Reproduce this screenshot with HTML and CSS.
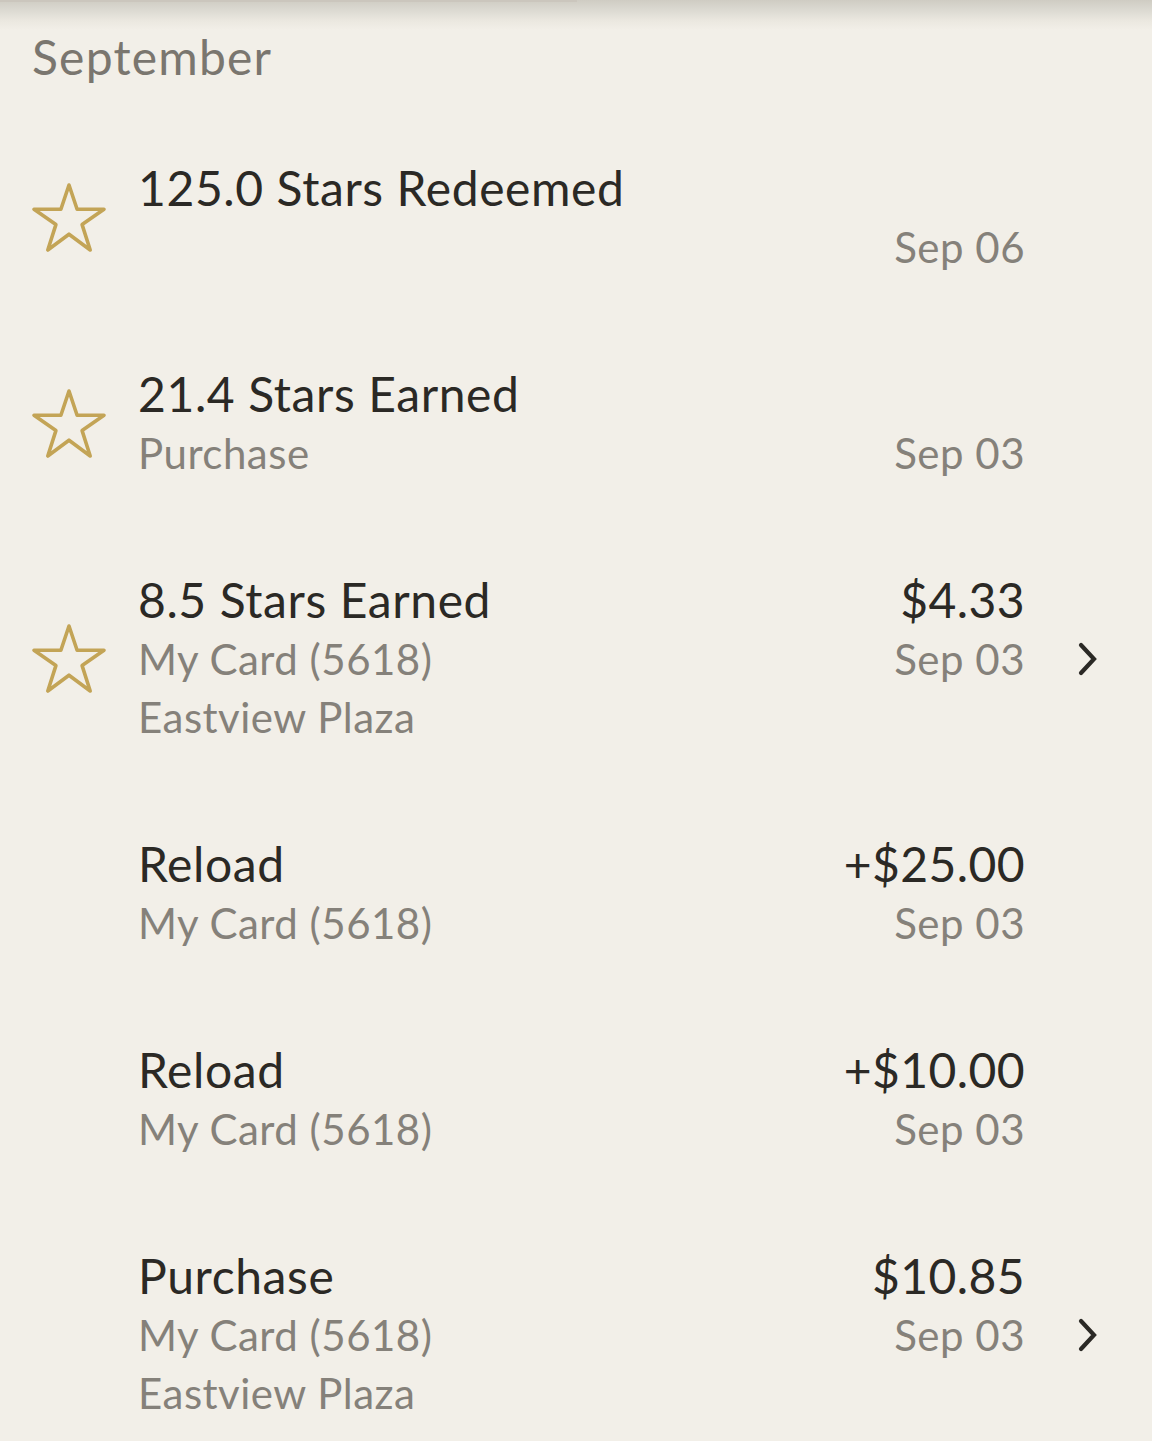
FILE: index.html
```html
<!DOCTYPE html>
<html lang="en">
<head>
<meta charset="utf-8">
<title>History</title>
<link rel="stylesheet" href="styles.css">
</head>
<body>
<div class="page">
  <div class="topshade"><div class="tabline"></div></div>
  <h2 class="month">September</h2>

  <div class="row">
    <div class="icon"><svg viewBox="0 0 80 76" width="82" height="78"><polygon class="star" points="40,4 48.1,28.3 75,28.3 53.1,43.6 61.2,69 40,53.2 18.8,69 26.9,43.6 5,28.3 31.9,28.3"/></svg></div>
    <div class="left">
      <div class="title">125.0 Stars Redeemed</div>
      <div class="sub">&nbsp;</div>
    </div>
    <div class="right">
      <div class="title">&nbsp;</div>
      <div class="sub">Sep 06</div>
    </div>
    <div class="chev"></div>
  </div>

  <div class="row">
    <div class="icon"><svg viewBox="0 0 80 76" width="82" height="78"><polygon class="star" points="40,4 48.1,28.3 75,28.3 53.1,43.6 61.2,69 40,53.2 18.8,69 26.9,43.6 5,28.3 31.9,28.3"/></svg></div>
    <div class="left">
      <div class="title">21.4 Stars Earned</div>
      <div class="sub">Purchase</div>
    </div>
    <div class="right">
      <div class="title">&nbsp;</div>
      <div class="sub">Sep 03</div>
    </div>
    <div class="chev"></div>
  </div>

  <div class="row">
    <div class="icon"><svg viewBox="0 0 80 76" width="82" height="78"><polygon class="star" points="40,4 48.1,28.3 75,28.3 53.1,43.6 61.2,69 40,53.2 18.8,69 26.9,43.6 5,28.3 31.9,28.3"/></svg></div>
    <div class="left">
      <div class="title">8.5 Stars Earned</div>
      <div class="sub">My Card (5618)</div>
      <div class="sub">Eastview Plaza</div>
    </div>
    <div class="right">
      <div class="title">$4.33</div>
      <div class="sub">Sep 03</div>
      <div class="sub">&nbsp;</div>
    </div>
    <div class="chev"><svg viewBox="0 0 20 34" width="20" height="34"><polyline points="3,3 16,17 3,31"/></svg></div>
  </div>

  <div class="row">
    <div class="icon"></div>
    <div class="left">
      <div class="title">Reload</div>
      <div class="sub">My Card (5618)</div>
    </div>
    <div class="right">
      <div class="title">+$25.00</div>
      <div class="sub">Sep 03</div>
    </div>
    <div class="chev"></div>
  </div>

  <div class="row">
    <div class="icon"></div>
    <div class="left">
      <div class="title">Reload</div>
      <div class="sub">My Card (5618)</div>
    </div>
    <div class="right">
      <div class="title">+$10.00</div>
      <div class="sub">Sep 03</div>
    </div>
    <div class="chev"></div>
  </div>

  <div class="row">
    <div class="icon"></div>
    <div class="left">
      <div class="title">Purchase</div>
      <div class="sub">My Card (5618)</div>
      <div class="sub">Eastview Plaza</div>
    </div>
    <div class="right">
      <div class="title">$10.85</div>
      <div class="sub">Sep 03</div>
      <div class="sub">&nbsp;</div>
    </div>
    <div class="chev"><svg viewBox="0 0 20 34" width="20" height="34"><polyline points="3,3 16,17 3,31"/></svg></div>
  </div>
</div>
</body>
</html>
```

FILE: styles.css
```css
html, body {
  margin: 0;
  padding: 0;
  background: #f2efe8;
}
body {
  font-family: Lato, "Noto Sans", "Liberation Sans", sans-serif;
  color: #2b2925;
  height: 1441px;
  overflow: hidden;
}
.page {
  position: relative;
  width: 1152px;
}
.topshade {
  position: absolute;
  left: 0;
  top: 0;
  width: 100%;
  height: 30px;
  background: linear-gradient(to bottom, #cfccc3 0%, #dcdad2 35%, #ebe8e0 70%, rgba(242,239,232,0) 100%);
}
.tabline {
  width: 577px;
  height: 2px;
  background: #cbc6bd;
}
.month {
  margin: 0;
  box-sizing: border-box;
  height: 112px;
  padding: 28px 0 0 32px;
  font-size: 48px;
  line-height: 58px;
  font-weight: 400;
  letter-spacing: 1.2px;
  color: #7a766f;
}
.row {
  display: flex;
  align-items: center;
  padding: 46px 0 42px;
}
.icon {
  width: 80px;
  margin-left: 28px;
  margin-right: 30px;
  display: flex;
  justify-content: center;
}
.icon svg {
  display: block;
  position: relative;
  top: 2px;
  left: 1px;
}
.star {
  fill: none;
  stroke: #c3a456;
  stroke-width: 3.6;
  stroke-linejoin: round;
}
.left {
  flex: 1;
}
.right {
  text-align: right;
}
.title {
  font-size: 48px;
  line-height: 60px;
  letter-spacing: 0.6px;
  color: #2b2925;
  white-space: nowrap;
}
.right .title {
  letter-spacing: 0.4px;
}
.sub {
  font-size: 42px;
  line-height: 58px;
  letter-spacing: 0.5px;
  color: #85817a;
  white-space: nowrap;
}
.chev {
  width: 127px;
  display: flex;
  justify-content: center;
}
.chev svg {
  display: block;
  margin-left: -2px;
  position: relative;
  top: 1px;
}
.chev polyline {
  fill: none;
  stroke: #2b2925;
  stroke-width: 4.2;
  stroke-linecap: round;
  stroke-linejoin: miter;
}
```
